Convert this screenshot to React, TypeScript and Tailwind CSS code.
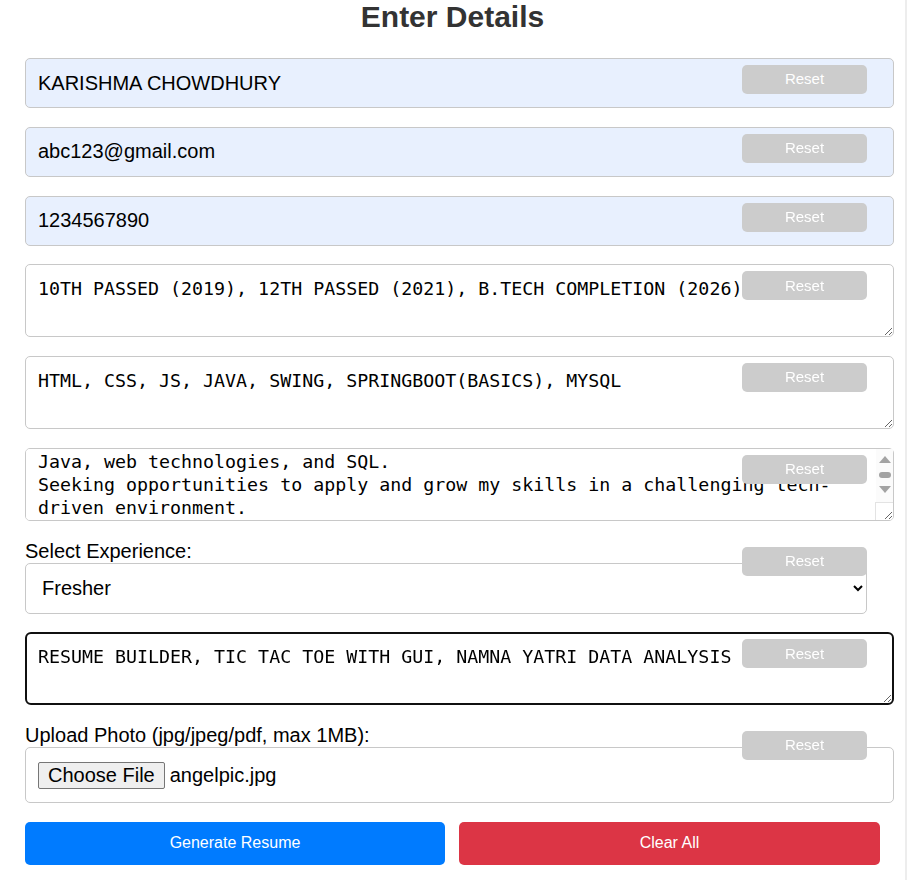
import React, { useEffect, useRef, useState } from 'react';

const sans = "font-['Liberation_Sans',Arial,sans-serif]";
const mono = "font-['DejaVu_Sans_Mono','Liberation_Mono',monospace]";

const summaryText =
  'A hardworking and motivated B.Tech student who enjoys building software.\n' +
  'Motivated B.Tech student with a solid base in the fundamentals of coding\n' +
  'Java, web technologies, and SQL.\n' +
  'Seeking opportunities to apply and grow my skills in a challenging tech-driven environment.';

const ResetButton: React.FC<{ onClick: () => void }> = ({ onClick }) => (
  <button
    type="button"
    onClick={onClick}
    className={`absolute right-[13px] top-[7px] z-10 h-[29px] w-[125px] rounded-[5px] bg-[#cccccc] text-[15px] text-white ${sans}`}
  >
    Reset
  </button>
);

// classic scrollbar look for the summary box
const FakeScrollbar: React.FC = () => (
  <div className="pointer-events-none absolute left-[851px] top-[1px] flex h-[54px] w-[17px] flex-col items-center bg-[#fbfbfb] pt-[7px]">
    <svg width="12" height="7" viewBox="0 0 12 7">
      <path d="M6 0 L12 7 L0 7 Z" fill="#a3a3a3" />
    </svg>
    <div className="mt-[9px] h-[6px] w-[12px] rounded-full bg-[#a3a3a3]" />
    <svg width="12" height="7" viewBox="0 0 12 7" className="mt-[8px]">
      <path d="M0 0 L12 0 L6 7 Z" fill="#a3a3a3" />
    </svg>
  </div>
);

const App: React.FC = () => {
  const [name, setName] = useState('KARISHMA CHOWDHURY');
  const [email, setEmail] = useState('abc123@gmail.com');
  const [phone, setPhone] = useState('1234567890');
  const [education, setEducation] = useState('10TH PASSED (2019), 12TH PASSED (2021), B.TECH COMPLETION (2026)');
  const [skills, setSkills] = useState('HTML, CSS, JS, JAVA, SWING, SPRINGBOOT(BASICS), MYSQL');
  const [summary, setSummary] = useState(summaryText);
  const [experience, setExperience] = useState('Fresher');
  const [projects, setProjects] = useState('RESUME BUILDER, TIC TAC TOE WITH GUI, NAMNA YATRI DATA ANALYSIS');
  const [photo, setPhoto] = useState('angelpic.jpg');

  const summaryRef = useRef<HTMLTextAreaElement>(null);

  useEffect(() => {
    // the summary box is shown scrolled down a little
    if (summaryRef.current) summaryRef.current.scrollTop = 57;
  }, []);

  const clearAll = () => {
    setName('');
    setEmail('');
    setPhone('');
    setEducation('');
    setSkills('');
    setSummary('');
    setExperience('Fresher');
    setProjects('');
    setPhoto('');
  };

  const inputCls = `block h-[50px] w-[869px] rounded-[5px] border border-[#c8c8c8] bg-[#e8f0fe] px-[12px] text-[20px] text-black outline-none ${sans}`;
  const areaBase = `block h-[73px] w-[869px] bg-white text-[18.3px] leading-[23px] text-black outline-none ${mono}`;
  const areaCls = `${areaBase} rounded-[5px] border border-[#c8c8c8] p-[12px]`;

  return (
    <div className={`min-h-screen w-[907px] border-r-2 border-[#ededed] bg-white ${sans}`}>
      <div className="w-[905px] px-[25px] pb-[14px]">
        <h2 className="mb-[25px] text-center text-[30px] font-bold leading-[33px] text-[#333333]">Enter Details</h2>

        {/* Name / email / phone */}
        <div className="relative mb-[18.75px]">
          <input className={inputCls} value={name} onChange={(e) => setName(e.target.value)} />
          <ResetButton onClick={() => setName('')} />
        </div>
        <div className="relative mb-[18.75px]">
          <input className={inputCls} value={email} onChange={(e) => setEmail(e.target.value)} />
          <ResetButton onClick={() => setEmail('')} />
        </div>
        <div className="relative mb-[18.75px]">
          <input className={inputCls} value={phone} onChange={(e) => setPhone(e.target.value)} />
          <ResetButton onClick={() => setPhone('')} />
        </div>

        {/* Education */}
        <div className="relative mb-[18.75px]">
          <textarea className={areaCls} value={education} onChange={(e) => setEducation(e.target.value)} />
          <ResetButton onClick={() => setEducation('')} />
        </div>

        {/* Skills */}
        <div className="relative mb-[18.75px]">
          <textarea className={areaCls} value={skills} onChange={(e) => setSkills(e.target.value)} />
          <ResetButton onClick={() => setSkills('')} />
        </div>

        {/* Summary */}
        <div className="relative mb-[18.75px]">
          <textarea
            ref={summaryRef}
            className={`${areaBase} rounded-[5px] border border-[#c8c8c8] py-[12px] pl-[12px] pr-[29px]`}
            value={summary}
            onChange={(e) => setSummary(e.target.value)}
          />
          <FakeScrollbar />
          <div className="pointer-events-none absolute bottom-[1px] left-[850px] h-[18px] w-[18px] border-l border-t border-[#e3e3e3]" />
          <ResetButton onClick={() => setSummary('')} />
        </div>

        {/* Experience */}
        <div className="relative mb-[18.75px]">
          <label className="block text-[20px] leading-[23px] text-black">Select Experience:</label>
          <select
            className={`block h-[51px] w-[842px] rounded-[5px] border border-[#c8c8c8] bg-white px-[12px] text-[20px] text-black outline-none ${sans}`}
            value={experience}
            onChange={(e) => setExperience(e.target.value)}
          >
            <option>Fresher</option>
            <option>1-2 Years</option>
            <option>3-5 Years</option>
            <option>5+ Years</option>
          </select>
          <ResetButton onClick={() => setExperience('Fresher')} />
        </div>

        {/* Projects (focused) */}
        <div className="relative mb-[18.75px]">
          <textarea
            className={`${areaBase} rounded-[6px] border-2 border-[#101010] p-[11px]`}
            value={projects}
            onChange={(e) => setProjects(e.target.value)}
          />
          <ResetButton onClick={() => setProjects('')} />
        </div>

        {/* Photo */}
        <div className="relative mb-[18.75px]">
          <label className="block text-[20px] leading-[23px] text-black">Upload Photo (jpg/jpeg/pdf, max 1MB):</label>
          <div className="flex h-[56px] w-[869px] items-center rounded-[5px] border border-[#c8c8c8] bg-white px-[12px]">
            <button
              type="button"
              className="h-[27px] rounded-[2px] border border-[#767676] bg-[#efefef] px-[9px] text-[20px] leading-[25px] text-black"
            >
              Choose File
            </button>
            <span className="ml-[5px] text-[20px] text-black">{photo || 'No file chosen'}</span>
          </div>
          <ResetButton onClick={() => setPhoto('')} />
        </div>

        {/* Actions */}
        <div className="flex gap-[14px]">
          <button type="button" className="h-[43px] w-[420px] rounded-[5px] bg-[#007bff] text-[16px] text-white">
            Generate Resume
          </button>
          <button
            type="button"
            onClick={clearAll}
            className="h-[43px] w-[421px] rounded-[5px] bg-[#dc3545] text-[16px] text-white"
          >
            Clear All
          </button>
        </div>
      </div>
    </div>
  );
};

export default App;
